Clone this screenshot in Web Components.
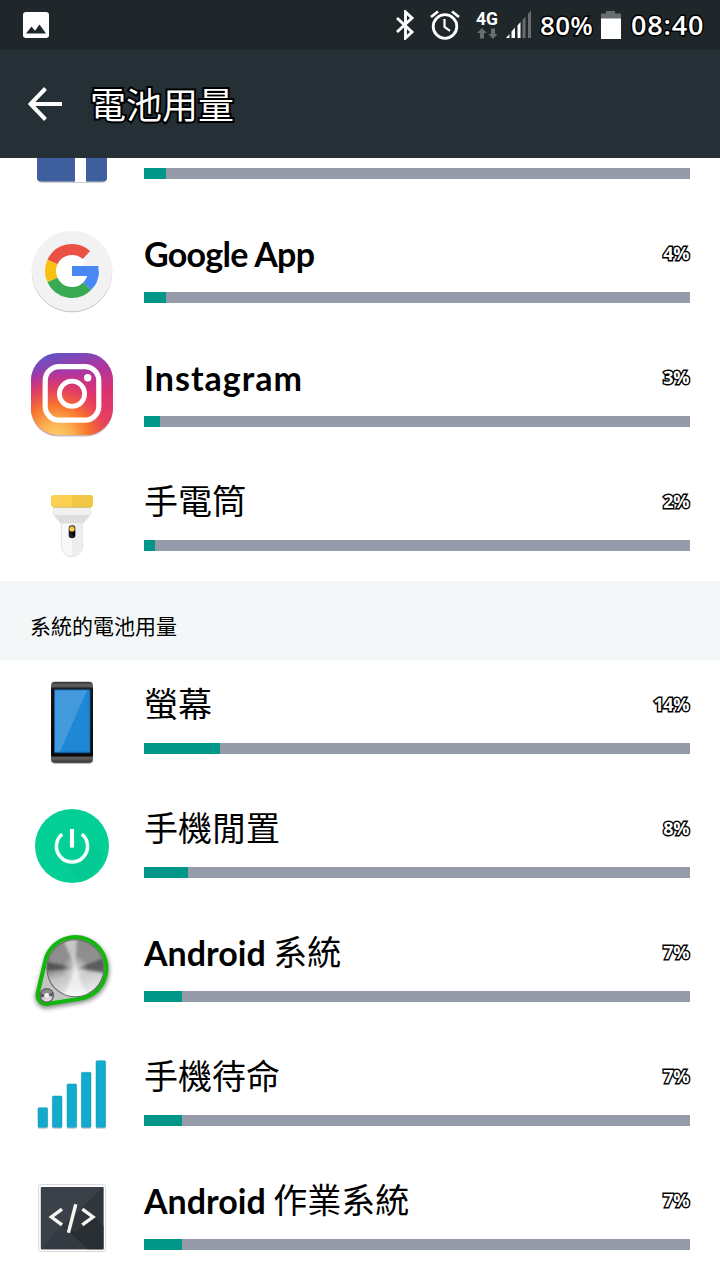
<!DOCTYPE html>
<html lang="zh-Hant">
<head>
    <meta charset="UTF-8">
    <meta name="viewport" content="width=device-width, initial-scale=1.0">
    <title>電池用量</title>
    <style>
      body {
        margin: 0;
        background: #fff;
      }
    </style>
</head>

<body>
  <battery-page>
    <status-bar slot="top" level="80%" time="08:40"></status-bar>
    <app-header slot="top">電池用量</app-header>
    <usage-row percent="4" clipped><app-icon slot="icon" name="facebook"></app-icon></usage-row>
    <usage-row percent="4"><app-icon slot="icon" name="google"></app-icon><b style="letter-spacing: -0.7px">Google App</b></usage-row>
    <usage-row percent="3"><app-icon slot="icon" name="instagram"></app-icon><b style="letter-spacing: 1px">Instagram</b></usage-row>
    <usage-row percent="2"><app-icon slot="icon" name="torch"></app-icon>手電筒</usage-row>
    <section-title>系統的電池用量</section-title>
    <usage-row percent="14"><app-icon slot="icon" name="screen"></app-icon>螢幕</usage-row>
    <usage-row percent="8"><app-icon slot="icon" name="power"></app-icon>手機閒置</usage-row>
    <usage-row percent="7"><app-icon slot="icon" name="system"></app-icon><b>Android</b> 系統</usage-row>
    <usage-row percent="7"><app-icon slot="icon" name="signal"></app-icon>手機待命</usage-row>
    <usage-row percent="7"><app-icon slot="icon" name="code"></app-icon><b>Android</b> 作業系統</usage-row>
  </battery-page>

  <script>
    // 96x96 drawings, centred on 48,48
    const icons = {
      facebook: `
        <rect x="13" y="14" width="70" height="70" rx="5" fill="#ccc"/>
        <rect x="13" y="13" width="70" height="69.5" rx="4" fill="#3f5f9f"/>
        <path d="M51 83V30h11v53z" fill="#fff"/>`,
      google: `
        <circle cx="48" cy="49" r="40.3" fill="#c4c4c4"/>
        <circle cx="48" cy="48" r="40.3" fill="#f2f2f2"/>
        <circle cx="48" cy="48" r="17" fill="#fff"/>
        <g fill="none" stroke-width="11">
          <path d="M28.5 39A21.5 21.5 0 0 1 62.4 32" stroke="#ea5044"/>
          <path d="M28.5 57A21.5 21.5 0 0 1 28.5 39" stroke="#fac011"/>
          <path d="M69.5 48A21.5 21.5 0 0 1 63 63.4" stroke="#4788f4"/>
          <path d="M63 63.4A21.5 21.5 0 0 1 28.5 57" stroke="#3aa956"/>
        </g>
        <path d="M60 38L68 43H58z" fill="#f4f4f4"/>
        <path d="M48 43h26.2a27 27 0 0 1 .2 7l-.4 3H48z" fill="#4788f4"/>`,
      instagram: `
        <defs>
          <linearGradient id="base" x1=".2" y1="0" x2=".45" y2="1">
            <stop offset="0" stop-color="#5d55c8"/><stop offset=".28" stop-color="#a837a5"/>
            <stop offset=".6" stop-color="#dd2f72"/><stop offset="1" stop-color="#e8435c"/>
          </linearGradient>
          <radialGradient id="glow" cx=".3" cy="1.05" r=".85">
            <stop offset="0" stop-color="#fed576"/><stop offset=".25" stop-color="#fbb04e"/>
            <stop offset=".5" stop-color="#f8722f"/><stop offset=".75" stop-color="#e8405a" stop-opacity=".75"/>
            <stop offset="1" stop-color="#d62e80" stop-opacity="0"/>
          </radialGradient>
        </defs>
        <rect x="7" y="7.5" width="82" height="82" rx="27" fill="#c9bcc0"/>
        <rect x="7" y="6" width="82" height="82" rx="27" fill="url(#base)"/>
        <rect x="7" y="6" width="82" height="82" rx="27" fill="url(#glow)"/>
        <g fill="none" stroke="#fff">
          <rect x="21.2" y="19.6" width="53.6" height="53.6" rx="14" stroke-width="5.2"/>
          <circle cx="48" cy="46.8" r="12.6" stroke-width="4.8"/>
        </g>
        <circle cx="63.7" cy="30.8" r="3.7" fill="#fff"/>`,
      torch: `
        <path d="M29.8 36h36.4v8l-7.5 8.5v22.500a10.7 10.7 0 0 1-21.4 0v-22.500L29.8 44z" fill="#f8f8f8" stroke="#d9d9d9" stroke-width=".8"/>
        <path d="M30 36h36v8H30z" fill="#f1f1ef"/>
        <path d="M30 44h36l-7.3 8.4H37.3z" fill="#dedede"/>
        <path d="M48 52.4h10.5v22.500A10.5 10.5 0 0 1 48 85.500z" fill="#ededed"/>
        <rect x="27" y="24" width="42" height="12.3" rx="3" fill="#fcd052"/>
        <path d="M48 24h18a3 3 0 0 1 3 3v6.3a3 3 0 0 1-3 3H48z" fill="#f1c746"/>
        <path d="M29 36.3h38" stroke="#d6b65a" stroke-width=".8"/>
        <rect x="44.7" y="54.2" width="6.7" height="13" rx="3.3" fill="#1e2326"/>
        <path d="M45 60l6 6V60z" fill="#000"/>
        <circle cx="48" cy="58" r="2.7" fill="#f3c84b"/>`,
      screen: `
        <defs>
          <linearGradient id="body" x2="0" y2="1">
            <stop offset="0" stop-color="#333"/><stop offset=".05" stop-color="#666"/><stop offset=".09" stop-color="#161616"/>
            <stop offset=".91" stop-color="#080808"/><stop offset=".94" stop-color="#666"/><stop offset="1" stop-color="#303030"/>
          </linearGradient>
          <pattern id="dots" width="3" height="3" patternUnits="userSpaceOnUse">
            <path d="M0 0h3M0 0v3" stroke="#0b6dbd" stroke-width=".7"/>
          </pattern>
        </defs>
        <rect x="27" y="9" width="42" height="81" rx="4" fill="#bbb"/>
        <rect x="27" y="7.7" width="42" height="81" rx="4" fill="url(#body)"/>
        <rect x="30" y="15.3" width="36.5" height="64" rx="1.5" fill="#0d5a9e"/>
        <rect x="31" y="16.3" width="34.5" height="61.5" fill="#2189d8"/>
        <rect x="31" y="16.3" width="34.5" height="61.5" fill="url(#dots)" opacity=".4"/>
        <path d="M31 16.3h32L36 77.8h-5z" fill="#fff" opacity=".16"/>`,
      power: `
        <circle cx="48" cy="48" r="37" fill="#04cf97"/>
        <path d="M59 36l20 20a37 37 0 0 1-22 28L37 60z" fill="#04c993"/>
        <circle cx="48" cy="48.5" r="13.8" fill="#04cf97"/>
        <path d="M38.2 36.2a15.6 15.6 0 1 0 19.6 0" fill="none" stroke="#f1fffa" stroke-width="3.6"/>
        <path d="M48 31v18.6" stroke="#fff" stroke-width="4.2"/>`,
      system: `
        <defs>
          <linearGradient id="metal" x1=".3" x2=".6" y2="1">
            <stop offset="0" stop-color="#8c8c8c"/><stop offset=".45" stop-color="#909090"/>
            <stop offset=".6" stop-color="#c4c4c4"/><stop offset="1" stop-color="#eee"/>
          </linearGradient>
          <radialGradient id="shine"><stop offset="0" stop-color="#fff"/><stop offset="1" stop-color="#fff" stop-opacity="0"/></radialGradient>
          <filter id="soft" x="-20%" y="-20%" width="140%" height="150%"><feGaussianBlur stdDeviation="2"/></filter>
          <filter id="blend"><feGaussianBlur stdDeviation="1.8"/></filter>
          <clipPath id="disc"><circle cx="51.3" cy="46.3" r="28"/></clipPath>
        </defs>
        <path d="M22 38L13.3 71A9.5 9.5 0 0 0 24.5 82.5L57.5 77A31.3 31.3 0 1 0 22 38z" fill="#555" stroke="#444" stroke-width="4" filter="url(#soft)" transform="translate(0 2)" opacity=".6"/>
        <path d="M22 36L13.8 71A9 9 0 0 0 24.5 81.8L57.5 76.5A31 31 0 1 0 22 36z" fill="#c4c4c4" stroke="#12b70e" stroke-width="4.2"/>
        <circle cx="51.3" cy="46.3" r="29" fill="#666"/>
        <circle cx="51.3" cy="46.3" r="28" fill="url(#metal)"/>
        <g clip-path="url(#disc)"><g filter="url(#blend)">
          <path d="M51.3 46.3L20 39v10zM51.3 46.3L82 35v16z" fill="#444" opacity=".8"/>
          <path d="M51.3 46.3L38 15h15z" fill="#fff" opacity=".5"/>
          <path d="M51.3 46.3L38 78h27z" fill="#fff" opacity=".6"/>
        </g></g>
        <circle cx="51.3" cy="46.3" r="13" fill="url(#shine)" opacity=".65"/>
        <circle cx="22.7" cy="73.5" r="7.5" fill="#666"/>
        <circle cx="22.7" cy="73.5" r="6" fill="url(#metal)"/>
        <path d="M22.7 73.5l-6-2v4zM22.7 73.5l6-3v4z" fill="#555"/>
        <circle cx="22.7" cy="73.5" r="2.5" fill="#eee"/>`,
      signal: `
        <g fill="#b7c9ce" transform="translate(0 1.2)">
          <rect x="14" y="61.7" width="9.6" height="19.8" rx="1"/><rect x="28.4" y="50" width="9.6" height="31.5" rx="1"/>
          <rect x="43" y="38" width="9.6" height="43.5" rx="1"/><rect x="57.4" y="26.3" width="9.6" height="55.2" rx="1"/>
          <rect x="72" y="14.7" width="9.6" height="66.8" rx="1"/>
        </g>
        <g fill="#13abcd" stroke="#1696b4" stroke-width=".5">
          <rect x="14" y="61.7" width="9.6" height="19.6" rx="1"/><rect x="28.4" y="50" width="9.6" height="31.3" rx="1"/>
          <rect x="43" y="38" width="9.6" height="43.3" rx="1"/><rect x="57.4" y="26.3" width="9.6" height="55" rx="1"/>
          <rect x="72" y="14.7" width="9.6" height="66.6" rx="1"/>
        </g>`,
      code: `
        <rect x="14.6" y="14.6" width="67" height="67" rx="2.5" fill="#fff" stroke="#d8d8d8"/>
        <rect x="16.8" y="17" width="62.6" height="62.3" rx="1" fill="#3a4148"/>
        <path d="M79.4 17v62.3H64L38 55.7 48 47z" fill="#30363b"/>
        <path d="M38 55.7L52 62l18-15 9.4 9v23.3H63z" fill="#292e32"/>
        <path d="M16.8 79.3L38 55.7l26 23.6z" fill="#343a42"/>
        <g fill="none" stroke="#f6f6f0" stroke-width="3.4">
          <path d="M38 39.2L27.4 47 38 54.8M58.3 39.2L69 47 58.3 54.8M51.8 34.3l-7.4 28.4"/>
        </g>`
    }

    customElements.define("app-icon", class extends HTMLElement {
      constructor() {
        super();
        this.attachShadow({ mode: "open" });
      }

      connectedCallback() {
        this.shadowRoot.innerHTML = `<style>
          :host {
            display: block;
            width: 96px;
            height: 96px;
          }

          svg {
            display: block;
          }
        </style>
        <svg width="96" height="96" viewBox="0 0 96 96">${icons[this.getAttribute("name")]}</svg>`
      }
    });

    customElements.define("battery-page", class extends HTMLElement {
      constructor() {
        super();
        this.attachShadow({ mode: "open" });
      }

      connectedCallback() {
        this.shadowRoot.innerHTML = `<style>
          :host {
            display: flex;
            flex-direction: column;
            width: 720px;
            height: 1280px;
            overflow: hidden;
            color: #000;
            font-family: "Noto Sans CJK TC", sans-serif;
          }

          /* the list is scrolled to its end, so it overflows at the top */
          main {
            flex: 1;
            min-height: 0;
            display: flex;
            flex-direction: column;
            justify-content: flex-end;
            overflow: hidden;
          }
        </style>
        <slot name="top"></slot>
        <main><slot></slot></main>`
      }
    });

    customElements.define("status-bar", class extends HTMLElement {
      constructor() {
        super();
        this.attachShadow({ mode: "open" });
      }

      connectedCallback() {
        this.shadowRoot.innerHTML = `<style>
          :host {
            flex: none;
            display: flex;
            align-items: center;
            box-sizing: border-box;
            height: 50px;
            padding: 0 16px 0 23px;
            background: #20272a;
            color: #fff;
            font: 600 26px/50px "Open Sans", sans-serif;
          }

          svg {
            display: block;
            flex: none;
          }

          span {
            -webkit-text-stroke: 3px #000;
            paint-order: stroke fill;
            white-space: nowrap;
          }

          .picture {
            margin-right: auto;
          }

          .network {
            width: 24px;
            margin-left: 16px;
          }

          .network b {
            display: block;
            height: 15px;
            font: bold 17.5px/15px Roboto, sans-serif;
          }

          .level {
            width: 54px;
            margin: 0 7px 0 8px;
            letter-spacing: 0.3px;
          }

          .time {
            width: 73px;
            margin-left: 10px;
            font-size: 27px;
            letter-spacing: 0.8px;
          }
        </style>
        <svg class="picture" width="26" height="26" viewBox="0 0 26 26">
          <rect width="26" height="26" rx="3" fill="#fff"/>
          <path d="M3 21.5l5.5-7 3.5 4.3 4.5-6.3 6.5 9z" fill="#20272a"/>
        </svg>
        <svg width="20" height="30" viewBox="0 0 20 30">
          <path d="M2 8l15 14-6.5 6V2L17 8 2 22" fill="none" stroke="#fff" stroke-width="2.9"/>
        </svg>
        <svg width="30" height="30" viewBox="0 0 30 30" style="margin-left: 15px">
          <g fill="none" stroke="#fff" stroke-width="2.8">
            <circle cx="15" cy="16.5" r="11.8"/>
            <path d="M1 7l7-5.5M29 7l-7-5.5"/>
            <path d="M14.5 9v8l5.5 3.8" stroke-width="2.2"/>
          </g>
        </svg>
        <div class="network">
          <b>4G</b>
          <svg width="22" height="11" viewBox="0 0 22 11" style="margin-top: 1px">
            <path d="M6 0l5 5H8v5.5H4V5H1zM17 11l-4.5-5H15V.5h4V6h2.5z" fill="#686d6f"/>
          </svg>
        </div>
        <svg width="27" height="30" viewBox="0 0 27 30" style="margin-left: 5px">
          <path d="M1 28l3.500-4v4zM6.500 28v-6.500l3.500-4V28zM12.500 28V15.500l3-3.500V28z" fill="#fff"/>
          <path d="M17.500 28V10l3-3.500V28zM23 28V4l3-3.500V28z" fill="#686d6f"/>
        </svg>
        <span class="level">${this.getAttribute("level")}</span>
        <svg width="20" height="30" viewBox="0 0 20 30">
          <path d="M0 9V3.500h5V1h9v2.500h6V9z" fill="#686d6f"/>
          <path d="M0 8.500h20V29H0z" fill="#fff"/>
        </svg>
        <span class="time">${this.getAttribute("time")}</span>`
      }
    });

    customElements.define("app-header", class extends HTMLElement {
      constructor() {
        super();
        this.attachShadow({ mode: "open" });
      }

      connectedCallback() {
        this.shadowRoot.innerHTML = `<style>
          :host {
            flex: none;
            display: flex;
            align-items: center;
            gap: 28px;
            box-sizing: border-box;
            height: 108px;
            padding-left: 28px;
            background: #243036;
            color: #fff;
            font-size: 36px;
            line-height: 54px;
          }

          h1 {
            margin: 0 0 3px;
            font: inherit;
            -webkit-text-stroke: 4px #000;
            paint-order: stroke fill;
          }
        </style>
        <svg width="34" height="34" viewBox="0 0 34 34">
          <path d="M34 17H3M17.500 1.500L2.500 17l15 15.500" fill="none" stroke="#fff" stroke-width="4"/>
        </svg>
        <h1><slot></slot></h1>`
      }
    });

    customElements.define("section-title", class extends HTMLElement {
      constructor() {
        super();
        this.attachShadow({ mode: "open" });
      }

      connectedCallback() {
        this.shadowRoot.innerHTML = `<style>
          :host {
            flex: none;
            display: block;
            box-sizing: border-box;
            height: 79px;
            padding: 28px 30px 0;
            background: #f3f7f8;
            font-size: 21px;
            line-height: 32px;
          }
        </style>
        <slot></slot>`
      }
    });

    customElements.define("usage-row", class extends HTMLElement {
      constructor() {
        super();
        this.attachShadow({ mode: "open" });
      }

      connectedCallback() {
        const percent = this.getAttribute("percent")
        // A clipped row only shows its bar below the header
        const label = this.hasAttribute("clipped") ? "" : percent + "%"
        this.shadowRoot.innerHTML = `<style>
          :host {
            flex: none;
            display: flex;
            gap: 24px;
            box-sizing: border-box;
            height: 124px;
            padding: 14px 30px 0 24px;
          }

          .info {
            flex: 1;
          }

          .line {
            display: flex;
            justify-content: space-between;
            height: 69px;
            font-size: 34px;
            line-height: 58px;
            white-space: nowrap;
          }

          ::slotted(b) {
            font-family: Lato, sans-serif;
            font-size: 34px;
            line-height: 1;
            vertical-align: -1px;
          }

          .percent {
            padding-right: 1px;
            color: #fff;
            font: bold 18px/61px "Open Sans", sans-serif;
            letter-spacing: -0.4px;
            -webkit-text-stroke: 2.8px #000;
            paint-order: stroke fill;
          }

          .track {
            height: 11px;
            background: #959ba9;
          }

          .fill {
            width: ${percent}%;
            height: 100%;
            background: #009688;
          }
        </style>
        <slot name="icon"></slot>
        <div class="info">
          <div class="line"><div><slot></slot></div><div class="percent">${label}</div></div>
          <div class="track"><div class="fill"></div></div>
        </div>`
      }
    });
  </script>

</body>
</html>
